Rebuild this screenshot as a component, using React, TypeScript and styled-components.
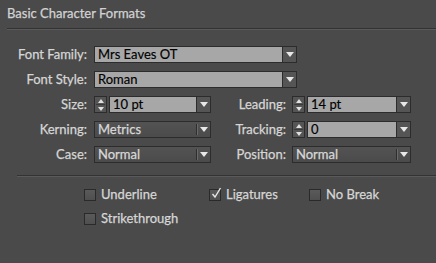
import React from "react";
import styled, { createGlobalStyle } from "styled-components";

const Global = createGlobalStyle`
  html, body { margin: 0; padding: 0; background: #4a4a4a; }
  body { width: 436px; height: 263px; overflow: hidden; font-family: Lato, "Open Sans", sans-serif; }
`;

const Panel = styled.div`
  width: 436px;
  height: 263px;
  background: #4a4a4a;
  color: #d6d6d6;
  display: flex;
  flex-direction: column;
  font-size: 13px;
  -webkit-text-stroke: 0.25px currentColor;
`;

const Header = styled.div`
  box-sizing: border-box;
  padding: 5px 0 0 7px;
  height: 28px;
  font-size: 13px;
  line-height: 16px;
  color: #d2d2d2;
`;

const Separator = styled.div<{ $left: number }>`
  margin-left: ${(p) => p.$left}px;
  height: 0;
  border-top: 1px solid #333333;
  border-bottom: 1px solid #5a5a5a;
`;

const Form = styled.div`
  display: grid;
  grid-template-columns: 94px 117px 81px 119px;
  grid-auto-rows: 17px;
  row-gap: 8px;
  margin-top: 16px;
  margin-bottom: 12px;
`;

const Label = styled.div<{ $pad: number }>`
  text-align: right;
  padding-right: ${(p) => p.$pad}px;
  line-height: 17px;
  white-space: nowrap;
  color: #d6d6d6;
`;

const Combo = styled.div<{ $width?: number; $span?: number }>`
  display: flex;
  height: 17px;
  width: ${(p) => (p.$width ? `${p.$width}px` : "auto")};
  grid-column: span ${(p) => p.$span ?? 1};
`;

const Field = styled.div`
  flex: 1;
  box-sizing: border-box;
  height: 17px;
  background: #a7a7a7;
  border: 1px solid #2c2c2c;
  color: #000;
  -webkit-text-stroke: 0.15px #000;
  padding-left: 3px;
  line-height: 15px;
  white-space: nowrap;
  overflow: hidden;
`;

const ArrowBtn = styled.div`
  box-sizing: border-box;
  width: 14px;
  height: 17px;
  background: #555555;
  border: 1px solid #2c2c2c;
  border-left: none;
  display: flex;
  align-items: center;
  justify-content: center;
`;

const Triangle = styled.div`
  width: 0;
  height: 0;
  border-left: 4px solid transparent;
  border-right: 4px solid transparent;
  border-top: 5px solid #e8e8e8;
`;

const Spinner = styled.div`
  box-sizing: border-box;
  width: 13px;
  height: 17px;
  margin-right: 2px;
  background: #555555;
  border: 1px solid #2c2c2c;
  display: flex;
  flex-direction: column;
  align-items: center;
  justify-content: space-evenly;
`;

const SpinUp = styled.div`
  width: 0;
  height: 0;
  border-left: 3.5px solid transparent;
  border-right: 3.5px solid transparent;
  border-bottom: 4px solid #e0e0e0;
`;

const SpinDown = styled(SpinUp)`
  border-bottom: none;
  border-top: 4px solid #e0e0e0;
`;

const SpinDivider = styled.div`
  width: 9px;
  height: 1px;
  background: #3a3a3a;
`;

const DarkCombo = styled.div`
  box-sizing: border-box;
  height: 17px;
  display: flex;
  align-items: center;
  background: linear-gradient(#535353, #4b4b4b);
  border: 1px solid #2c2c2c;
  color: #d8d8d8;
`;

const DarkText = styled.div`
  flex: 1;
  padding-left: 3px;
  line-height: 15px;
`;

const DarkSep = styled.div`
  width: 1px;
  height: 11px;
  background: #2e2e2e;
  border-right: 1px solid #6a6a6a;
`;

const DarkArrow = styled.div`
  width: 12px;
  display: flex;
  justify-content: center;
`;

const Checks = styled.div`
  display: grid;
  grid-template-columns: 125px 100px 100px;
  grid-auto-rows: 13px;
  row-gap: 11px;
  margin-top: 11px;
  padding-left: 84px;
`;

const CheckItem = styled.label`
  display: flex;
  align-items: center;
  gap: 5px;
  line-height: 13px;
  color: #d6d6d6;
  white-space: nowrap;
`;

const Box = styled.span`
  box-sizing: border-box;
  width: 12px;
  height: 12px;
  border: 1px solid #2a2a2a;
  background: linear-gradient(#5a5a5a, #4f4f4f);
  position: relative;
`;

const CheckMark = styled.svg`
  position: absolute;
  left: 1px;
  top: -3px;
`;

function LightCombo({ value, width, span }: { value: string; width?: number; span?: number }) {
  return (
    <Combo $width={width} $span={span}>
      <Field>{value}</Field>
      <ArrowBtn>
        <Triangle />
      </ArrowBtn>
    </Combo>
  );
}

function SpinCombo({ value }: { value: string }) {
  return (
    <Combo>
      <Spinner>
        <SpinUp />
        <SpinDivider />
        <SpinDown />
      </Spinner>
      <Field>{value}</Field>
      <ArrowBtn>
        <Triangle />
      </ArrowBtn>
    </Combo>
  );
}

function Dark({ value }: { value: string }) {
  return (
    <DarkCombo>
      <DarkText>{value}</DarkText>
      <DarkSep />
      <DarkArrow>
        <Triangle />
      </DarkArrow>
    </DarkCombo>
  );
}

function Check({ label, checked }: { label: string; checked?: boolean }) {
  return (
    <CheckItem>
      <Box>
        {checked && (
          <CheckMark width="11" height="12" viewBox="0 0 11 12">
            <path d="M1.5 7 L4 10 L9.5 1" fill="none" stroke="#e6e6e6" strokeWidth="1.4" />
          </CheckMark>
        )}
      </Box>
      {label}
    </CheckItem>
  );
}

export default function App() {
  return (
    <Panel>
      <Global />
      <Header>Basic Character Formats</Header>
      <Separator $left={7} />
      <Form>
        <Label $pad={7}>Font Family:</Label>
        <LightCombo value="Mrs Eaves OT" width={203} span={3} />
        <Label $pad={7}>Font Style:</Label>
        <LightCombo value="Roman" width={203} span={3} />
        <Label $pad={7}>Size:</Label>
        <SpinCombo value="10 pt" />
        <Label $pad={6}>Leading:</Label>
        <SpinCombo value="14 pt" />
        <Label $pad={7}>Kerning:</Label>
        <Dark value="Metrics" />
        <Label $pad={6}>Tracking:</Label>
        <SpinCombo value="0" />
        <Label $pad={7}>Case:</Label>
        <Dark value="Normal" />
        <Label $pad={6}>Position:</Label>
        <Dark value="Normal" />
      </Form>
      <Separator $left={17} />
      <Checks>
        <Check label="Underline" />
        <Check label="Ligatures" checked />
        <Check label="No Break" />
        <Check label="Strikethrough" />
      </Checks>
    </Panel>
  );
}
